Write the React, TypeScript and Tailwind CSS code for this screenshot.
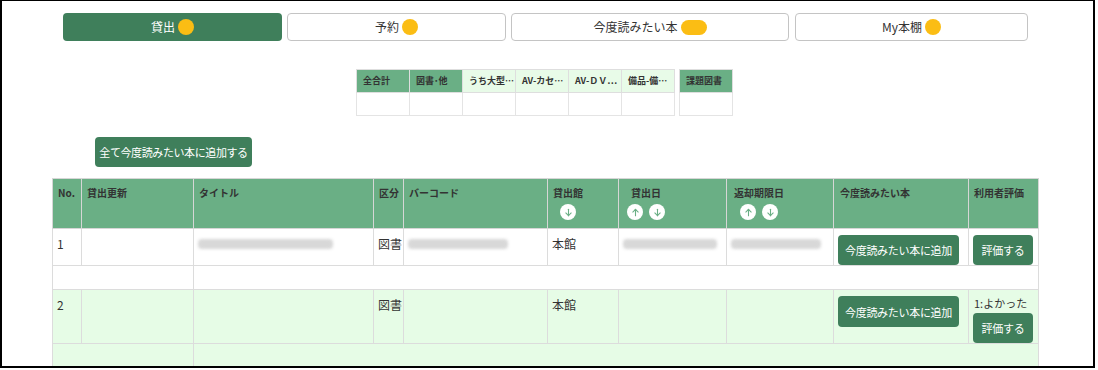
import React from "react";

const F = { fontFamily: '"Noto Sans CJK JP", "Noto Sans", sans-serif' };

function Dot({ wide = false }: { wide?: boolean }) {
  return (
    <span
      className={
        wide
          ? "inline-block w-[26px] h-[15px] rounded-full bg-[#fbbd14] ml-[3px]"
          : "inline-block w-[16px] h-[16px] rounded-full bg-[#fbbd14] ml-[3px]"
      }
    />
  );
}

function SortBtn({ dir }: { dir: "up" | "down" }) {
  return (
    <span className="inline-flex w-[16px] h-[16px] rounded-full bg-white items-center justify-center">
      <svg width="9" height="9" viewBox="0 0 10 10" fill="none" stroke="#6aaf85" strokeWidth="1.2" strokeLinecap="round" strokeLinejoin="round">
        {dir === "down" ? (
          <>
            <path d="M5 1.5v7" />
            <path d="M2 5.5l3 3 3-3" />
          </>
        ) : (
          <>
            <path d="M5 8.5v-7" />
            <path d="M2 4.5l3-3 3 3" />
          </>
        )}
      </svg>
    </span>
  );
}

function Blur({ w }: { w: number }) {
  return (
    <div
      className="h-[10px] bg-[#d8d8d8] blur-[1.5px] rounded-sm mt-[4px]"
      style={{ width: w }}
    />
  );
}

export default function App() {
  const th = "border border-[#d6d6d6] bg-[#6aaf85] align-top text-left font-bold text-[10px] leading-[14px] text-[#333] pt-[7px] pl-[5px]";
  const td = "border border-[#dcdcdc] align-top text-left text-[12px] leading-[18px] text-[#333] pt-[6px] pl-[4px]";
  const sh = "border border-[#dedede] h-[23px] text-left font-bold text-[9px] text-[#333] pl-[6px] w-[53px] whitespace-nowrap";
  const sd = "border border-[#e4e4e4] h-[23px] bg-white";
  const gbtn = "rounded-[4px] bg-[#3f7f5b] text-white text-[11px] tracking-[-0.3px] whitespace-nowrap";
  return (
    <div className="w-[1098px] h-[370px] bg-white" style={F}>
      <div className="w-[1095px] h-[368px] border-2 border-t-[1px] border-black overflow-hidden">
        {/* Tabs */}
        <div className="flex pl-[61px] pt-[12px] gap-[5px]">
          <div className="w-[219px] h-[28px] rounded-[4px] bg-[#3f7f5b] flex items-center justify-center text-white text-[12px]">
            貸出<Dot />
          </div>
          <div className="w-[219px] h-[28px] rounded-[4px] border border-[#c4c4c4] flex items-center justify-center text-[#333] text-[12px]">
            予約<Dot />
          </div>
          <div className="w-[278px] h-[28px] rounded-[4px] border border-[#c4c4c4] flex items-center justify-center text-[#333] text-[12px]">
            今度読みたい本<Dot wide />
          </div>
          <div className="w-[233px] h-[28px] rounded-[4px] border border-[#c4c4c4] flex items-center justify-center text-[#333] text-[12px] ml-[1px]">
            My本棚<Dot />
          </div>
        </div>

        {/* Summary */}
        <div className="flex ml-[354px] mt-[28px] gap-[4px]">
          <table className="border-collapse">
            <thead>
              <tr>
                <th className={sh + " bg-[#6aaf85]"}>全合計</th>
                <th className={sh + " bg-[#6aaf85]"}>図書･他</th>
                <th className={sh + " bg-[#e8fbe8]"}>うち大型…</th>
                <th className={sh + " bg-[#e8fbe8]"}>AV-カセ…</th>
                <th className={sh + " bg-[#e8fbe8]"}>AV-ＤＶ…</th>
                <th className={sh + " bg-[#e8fbe8]"}>備品-備…</th>
              </tr>
            </thead>
            <tbody>
              <tr>
                <td className={sd}></td>
                <td className={sd}></td>
                <td className={sd}></td>
                <td className={sd}></td>
                <td className={sd}></td>
                <td className={sd}></td>
              </tr>
            </tbody>
          </table>
          <table className="border-collapse">
            <thead>
              <tr>
                <th className={sh + " bg-[#6aaf85]"}>課題図書</th>
              </tr>
            </thead>
            <tbody>
              <tr>
                <td className={sd}></td>
              </tr>
            </tbody>
          </table>
        </div>

        {/* Add all button */}
        <div className="ml-[93px] mt-[21px] h-[30px]">
          <button className={gbtn + " w-[157px] h-[30px] text-[10.5px] tracking-[-0.4px]"}>
            全て今度読みたい本に追加する
          </button>
        </div>

        {/* Main table */}
        <table className="border-collapse ml-[50px] mt-[11px] table-fixed w-[986px]">
          <colgroup>
            <col className="w-[29px]" />
            <col className="w-[112px]" />
            <col className="w-[180px]" />
            <col className="w-[30px]" />
            <col className="w-[144px]" />
            <col className="w-[71px]" />
            <col className="w-[108px]" />
            <col className="w-[107px]" />
            <col className="w-[135px]" />
            <col className="w-[70px]" />
          </colgroup>
          <thead>
            <tr className="h-[50px]">
              <th className={th}>No.</th>
              <th className={th}>貸出更新</th>
              <th className={th}>タイトル</th>
              <th className={th + " pl-[3px]"}>区分</th>
              <th className={th}>バーコード</th>
              <th className={th}>
                <span className="inline-flex flex-col items-center gap-[4px]">
                  <span>貸出館</span>
                  <SortBtn dir="down" />
                </span>
              </th>
              <th className={th + " pl-[8px]"}>
                <span className="inline-flex flex-col items-center gap-[4px]">
                  <span>貸出日</span>
                  <span className="flex gap-[6px]">
                    <SortBtn dir="up" />
                    <SortBtn dir="down" />
                  </span>
                </span>
              </th>
              <th className={th + " pl-[7px]"}>
                <span className="inline-flex flex-col items-center gap-[4px]">
                  <span>返却期限日</span>
                  <span className="flex gap-[6px]">
                    <SortBtn dir="up" />
                    <SortBtn dir="down" />
                  </span>
                </span>
              </th>
              <th className={th + " pl-[6px]"}>今度読みたい本</th>
              <th className={th + " pl-[5px]"}>利用者評価</th>
            </tr>
          </thead>
          <tbody>
            <tr className="h-[36px] bg-white">
              <td className={td}>1</td>
              <td className={td}></td>
              <td className={td}><Blur w={135} /></td>
              <td className={td + " pl-[2px]"}>図書</td>
              <td className={td}><Blur w={100} /></td>
              <td className={td}>本館</td>
              <td className={td}><Blur w={94} /></td>
              <td className={td}><Blur w={90} /></td>
              <td className={td + " pl-[3px] pt-[5px] pb-0"}>
                <button className={gbtn + " w-[121px] h-[30px] block"}>
                  今度読みたい本に追加
                </button>
              </td>
              <td className={td + " pl-[3px] pt-[5px] pb-0"}>
                <button className={gbtn + " w-[60px] h-[30px] block"}>
                  評価する
                </button>
              </td>
            </tr>
            <tr className="h-[24px] bg-white">
              <td className={td} colSpan={2}></td>
              <td className={td} colSpan={8}></td>
            </tr>
            <tr className="h-[53px] bg-[#e6fce6]">
              <td className={td}>2</td>
              <td className={td}></td>
              <td className={td}></td>
              <td className={td + " pl-[2px]"}>図書</td>
              <td className={td}></td>
              <td className={td}>本館</td>
              <td className={td}></td>
              <td className={td}></td>
              <td className={td + " pl-[3px] pt-[5px]"}>
                <button className={gbtn + " w-[121px] h-[31px] block"}>
                  今度読みたい本に追加
                </button>
              </td>
              <td className={td + " pl-[3px] pt-[4px] pb-0"}>
                <div className="text-[11px] leading-[15px] pl-[1px]">1:よかった</div>
                <button className={gbtn + " w-[60px] h-[30px] mt-[2px] block"}>
                  評価する
                </button>
              </td>
            </tr>
            <tr className="h-[26px] bg-[#e6fce6]">
              <td className={td} colSpan={2}></td>
              <td className={td} colSpan={8}></td>
            </tr>
          </tbody>
        </table>
      </div>
    </div>
  );
}
